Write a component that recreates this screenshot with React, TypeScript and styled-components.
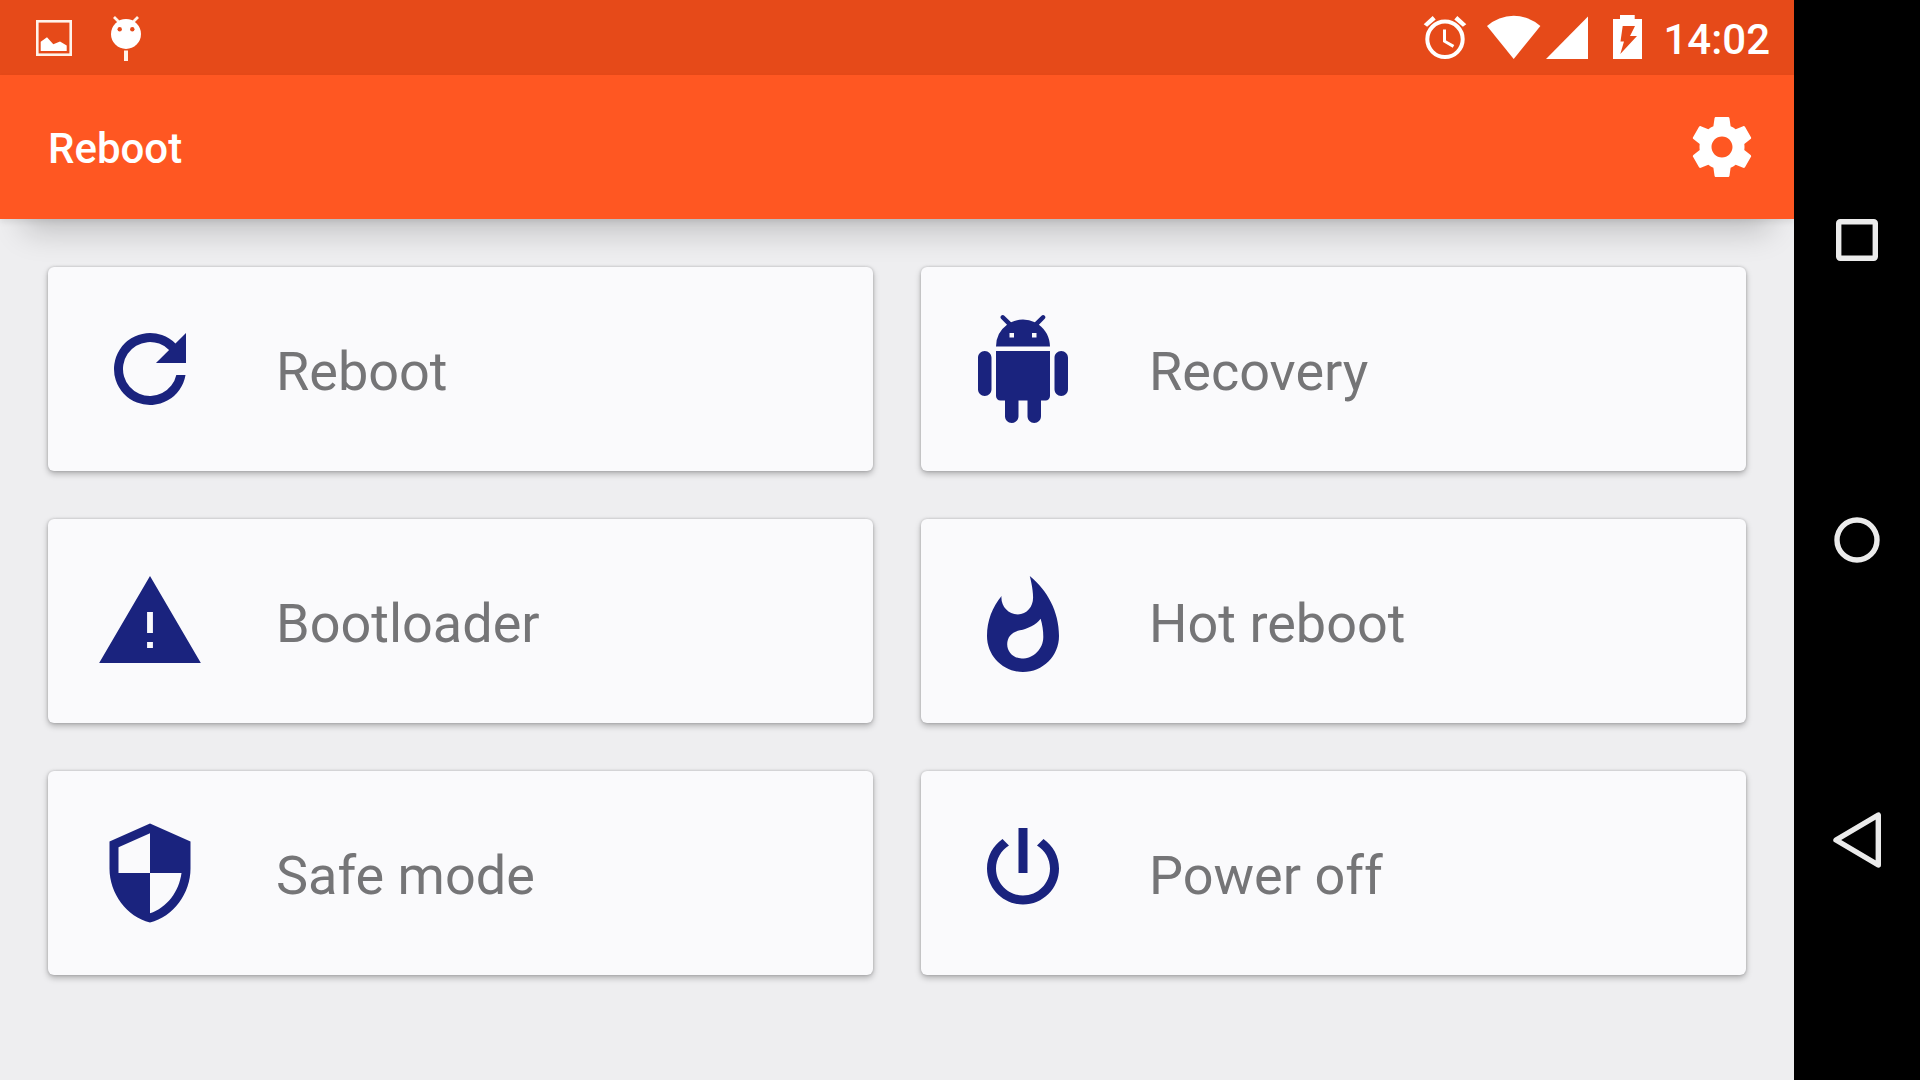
import React from "react";
import styled, { createGlobalStyle } from "styled-components";

const GlobalStyle = createGlobalStyle`
  *, *::before, *::after { box-sizing: border-box; }
  body {
    margin: 0;
    background: #eeeef0;
    font-family: Roboto, "Noto Sans", sans-serif;
  }
  button {
    border: 0;
    margin: 0;
    padding: 0;
    background: none;
    font: inherit;
    color: inherit;
    cursor: pointer;
  }
  svg { display: block; flex: none; }
`;

const Screen = styled.div`
  display: flex;
  min-height: 100vh;
  background: #000;
`;

const Activity = styled.div`
  flex: 1;
  min-width: 0;
  display: flex;
  flex-direction: column;
  overflow: hidden;
  background: #eeeef0;
`;

const StatusBar = styled.header`
  display: flex;
  align-items: center;
  justify-content: space-between;
  height: 75px;
  padding: 0 24px 0 36px;
  background: #e64a19;
  color: #fff;
`;

const StatusGroup = styled.div<{ $gap: number }>`
  display: flex;
  align-items: center;
  gap: ${(p) => p.$gap}px;
`;

const Clock = styled.time`
  padding-top: 4px;
  font-size: 42px;
  line-height: 48px;
  font-weight: 500;
`;

const AppBar = styled.div`
  display: flex;
  align-items: center;
  justify-content: space-between;
  height: 144px;
  padding: 0 36px 0 48px;
  background: #ff5722;
  color: #fff;
  box-shadow: 0 3px 6px rgba(0, 0, 0, 0.08), 0 36px 32px -24px rgba(0, 0, 0, 0.2);
`;

const Title = styled.h1`
  margin: 0;
  padding-top: 4px;
  font-size: 42px;
  line-height: 48px;
  font-weight: 500;
`;

const Cards = styled.main`
  display: grid;
  grid-template-columns: repeat(2, minmax(0, 1fr));
  gap: 48px;
  padding: 48px;
`;

const Card = styled.button`
  && {
    display: flex;
    align-items: center;
    gap: 72px;
    padding: 48px;
    border-radius: 6px;
    background: #fafafc;
    color: #1a237e;
    text-align: left;
    box-shadow: 0 0 3px rgba(0, 0, 0, 0.2), 0 3px 6px rgba(0, 0, 0, 0.26);
  }
`;

const CardLabel = styled.span`
  padding-top: 6px;
  color: #757577;
  font-size: 54px;
  line-height: 64px;
`;

const NavBar = styled.nav`
  display: flex;
  flex-direction: column;
  width: 126px;
  padding: 90px 0;
  background: #000;
`;

const NavButton = styled.button`
  flex: 1;
  display: flex;
  align-items: center;
  justify-content: center;
`;

const ACTIONS = [
  {
    label: "Reboot",
    path: "M17.65 6.35A8 8 0 1 0 19.89 13.33H17.85A6 6 0 1 1 16.24 7.76L13.33 10.67H20V4z",
    viewBox: "0 0 24 24",
  },
  {
    label: "Recovery",
    path: "M6 18c0 .55.45 1 1 1h1v3.5c0 .83.67 1.5 1.5 1.5s1.5-.67 1.5-1.5V19h2v3.5c0 .83.67 1.5 1.5 1.5s1.5-.67 1.5-1.5V19h1c.55 0 1-.45 1-1V8H6v10zM3.5 8C2.67 8 2 8.67 2 9.5v7c0 .83.67 1.5 1.5 1.5S5 17.33 5 16.5v-7C5 8.67 4.33 8 3.5 8zm17 0c-.83 0-1.5.67-1.5 1.5v7c0 .83.67 1.5 1.5 1.5s1.5-.67 1.5-1.5v-7c0-.83-.67-1.5-1.5-1.5zm-4.97-5.84l1.3-1.3c.2-.2.2-.51 0-.71-.2-.2-.51-.2-.71 0l-1.48 1.48A5.84 5.84 0 0 0 12 1c-.96 0-1.86.23-2.66.63L7.85.15c-.2-.2-.51-.2-.71 0-.2.2-.2.51 0 .71l1.31 1.31A5.98 5.98 0 0 0 6 7h12c0-1.99-.97-3.75-2.47-4.84zM10 5H9V4h1v1zm5 0h-1V4h1v1z",
    viewBox: "0 0 24 24",
  },
  {
    label: "Bootloader",
    path: "M.7 21.33h22.6L12 2zM12.65 18h-1.3v-1.33h1.3zM12.65 14.67h-1.3V10h1.3z",
    viewBox: "0 0 24 24",
  },
  {
    label: "Hot reboot",
    path: "M13.5.67s.74 2.65.74 4.8c0 2.06-1.35 3.73-3.41 3.73-2.07 0-3.63-1.67-3.63-3.73l.03-.36C5.21 7.51 4 10.62 4 14c0 4.42 3.58 8 8 8s8-3.58 8-8C20 8.61 17.41 3.8 13.5.67zM11.71 19c-1.78 0-3.22-1.4-3.22-3.14 0-1.62 1.05-2.76 2.81-3.12 1.77-.36 3.6-1.21 4.62-2.58.39 1.29.59 2.65.59 4.04 0 2.65-2.15 4.8-4.8 4.8z",
    viewBox: "0 -1.33 24 24",
  },
  {
    label: "Safe mode",
    path: "M12 1L3 5v6c0 5.55 3.84 10.74 9 12 5.16-1.26 9-6.45 9-12V5l-9-4zm0 10.99h7c-.53 4.12-3.28 7.79-7 8.94V12H5V6.3l7-3.11v8.8z",
    viewBox: "0 0 24 24",
  },
  {
    label: "Power off",
    path: "M13 2h-2v10h2V2zm3.56 2.44l-1.45 1.45C16.84 6.94 18 8.83 18 11c0 3.31-2.69 6-6 6s-6-2.69-6-6c0-2.17 1.16-4.06 2.88-5.12L7.44 4.44C5.36 5.88 4 8.28 4 11c0 4.42 3.58 8 8 8s8-3.58 8-8c0-2.72-1.36-5.12-3.44-6.56z",
    viewBox: "0 0 24 24",
  },
];

const PictureIcon = () => (
  <svg width="36" height="36" viewBox="0 0 36 36" aria-hidden="true">
    <rect x="1.3" y="1.3" width="33.4" height="33.4" fill="none" stroke="#fff3ea" strokeWidth="2.6" />
    <path d="M4.7 31V21.8L11 17.2l6.3 7L24 21.5l6.7 4V31z" fill="#fff" />
  </svg>
);

const DroidIcon = () => (
  <svg width="36" height="49" viewBox="0 0 36 49" aria-hidden="true">
    <path d="M6 4l5.5 5.5M30 4l-5.500 5.500" stroke="#fff3ea" strokeWidth="2.8" />
    <circle cx="18" cy="21" r="15" fill="#fff" />
    <circle cx="11.7" cy="16.3" r="2.2" fill="#e64a19" />
    <circle cx="24.3" cy="16.3" r="2.2" fill="#e64a19" />
    <path d="M16 37.5h4V48h-4z" fill="#fff3ea" />
  </svg>
);

const AlarmIcon = () => (
  <svg width="44" height="49" viewBox="0 0 44 49" aria-hidden="true">
    <circle cx="22" cy="26.3" r="17.7" fill="none" stroke="#fff" strokeWidth="4" />
    <path d="M21.5 16.5V28.200l9 5.200" fill="none" stroke="#fff" strokeWidth="3" />
    <path d="M.7 11.300l9-8.300 3 3.400-8.600 7.300zM43.300 11.300l-9-8.300-3 3.400 8.600 7.300z" fill="#fff" />
  </svg>
);

const WifiIcon = () => (
  <svg width="54" height="49" viewBox="0 0 54 49" aria-hidden="true">
    <path d="M0 13A40 40 0 0 1 53.400 13L26.700 46z" fill="#fff" />
  </svg>
);

const SignalIcon = () => (
  <svg width="47" height="49" viewBox="0 0 47 49" aria-hidden="true">
    <path d="M0 46L42 3.500V46z" fill="#fff" />
  </svg>
);

const BatteryIcon = () => (
  <svg width="30" height="49" viewBox="0 0 30 49" aria-hidden="true">
    <path
      fillRule="evenodd"
      d="M7 2h14.700v4H29v40H0V6h7zM9.700 13L7.500 28.500H11L7.300 41 24 23h-7l5-10z"
      fill="#fff"
    />
  </svg>
);

const SettingsIcon = () => (
  <svg width="72" height="72" viewBox="0 0 24 24" fill="#fff" aria-hidden="true">
    <path d="M19.430 12.980c.04-.32.07-.64.07-.98s-.03-.66-.07-.98l2.110-1.650c.19-.15.24-.42.12-.64l-2-3.460c-.12-.22-.39-.3-.61-.22l-2.490 1c-.52-.4-1.080-.73-1.690-.98l-.38-2.650A.488.488 0 0 0 14 2h-4c-.25 0-.46.18-.49.42l-.38 2.650c-.61.25-1.170.59-1.690.98l-2.490-1c-.23-.09-.49 0-.61.22l-2 3.460c-.13.22-.07.49.12.64l2.110 1.650c-.04.32-.07.65-.07.98s.03.66.07.98l-2.110 1.650c-.19.15-.24.42-.12.64l2 3.460c.12.22.39.3.61.22l2.490-1c.52.4 1.080.73 1.690.98l.38 2.650c.03.24.24.42.49.42h4c.25 0 .46-.18.49-.42l.38-2.650c.61-.25 1.170-.59 1.690-.98l2.490 1c.23.09.49 0 .61-.22l2-3.460c.12-.22.07-.49-.12-.64l-2.110-1.650zM12 15.500c-1.930 0-3.500-1.570-3.500-3.500s1.570-3.500 3.500-3.500 3.500 1.570 3.500 3.500-1.570 3.500-3.500 3.500z" />
  </svg>
);

const NavIcon = ({ children }: { children: React.ReactNode }) => (
  <svg
    width="60"
    height="60"
    viewBox="0 0 60 60"
    fill="none"
    stroke="#ebebeb"
    strokeWidth="5.4"
    strokeLinejoin="round"
    aria-hidden="true"
  >
    {children}
  </svg>
);

export default function App() {
  return (
    <Screen>
      <GlobalStyle />
      <Activity>
        <StatusBar>
          <StatusGroup $gap={36}>
            <PictureIcon />
            <DroidIcon />
          </StatusGroup>
          <StatusGroup $gap={20}>
            <AlarmIcon />
            <StatusGroup $gap={5}>
              <WifiIcon />
              <SignalIcon />
            </StatusGroup>
            <BatteryIcon />
            <Clock>14:02</Clock>
          </StatusGroup>
        </StatusBar>
        <AppBar>
          <Title>Reboot</Title>
          <button type="button" aria-label="Settings">
            <SettingsIcon />
          </button>
        </AppBar>
        <Cards>
          {ACTIONS.map((action) => (
            <Card key={action.label} type="button">
              <svg
                width="108"
                height="108"
                viewBox={action.viewBox}
                fill="currentColor"
                fillRule="evenodd"
                aria-hidden="true"
              >
                <path d={action.path} />
              </svg>
              <CardLabel>{action.label}</CardLabel>
            </Card>
          ))}
        </Cards>
      </Activity>
      <NavBar aria-label="System">
        <NavButton type="button" aria-label="Overview">
          <NavIcon>
            <rect x="11.7" y="11.7" width="36.6" height="36.6" rx="1.5" />
          </NavIcon>
        </NavButton>
        <NavButton type="button" aria-label="Home">
          <NavIcon>
            <circle cx="30" cy="30" r="20" />
          </NavIcon>
        </NavButton>
        <NavButton type="button" aria-label="Back">
          <NavIcon>
            <path d="M51.3 5V55L9 30z" />
          </NavIcon>
        </NavButton>
      </NavBar>
    </Screen>
  );
}
